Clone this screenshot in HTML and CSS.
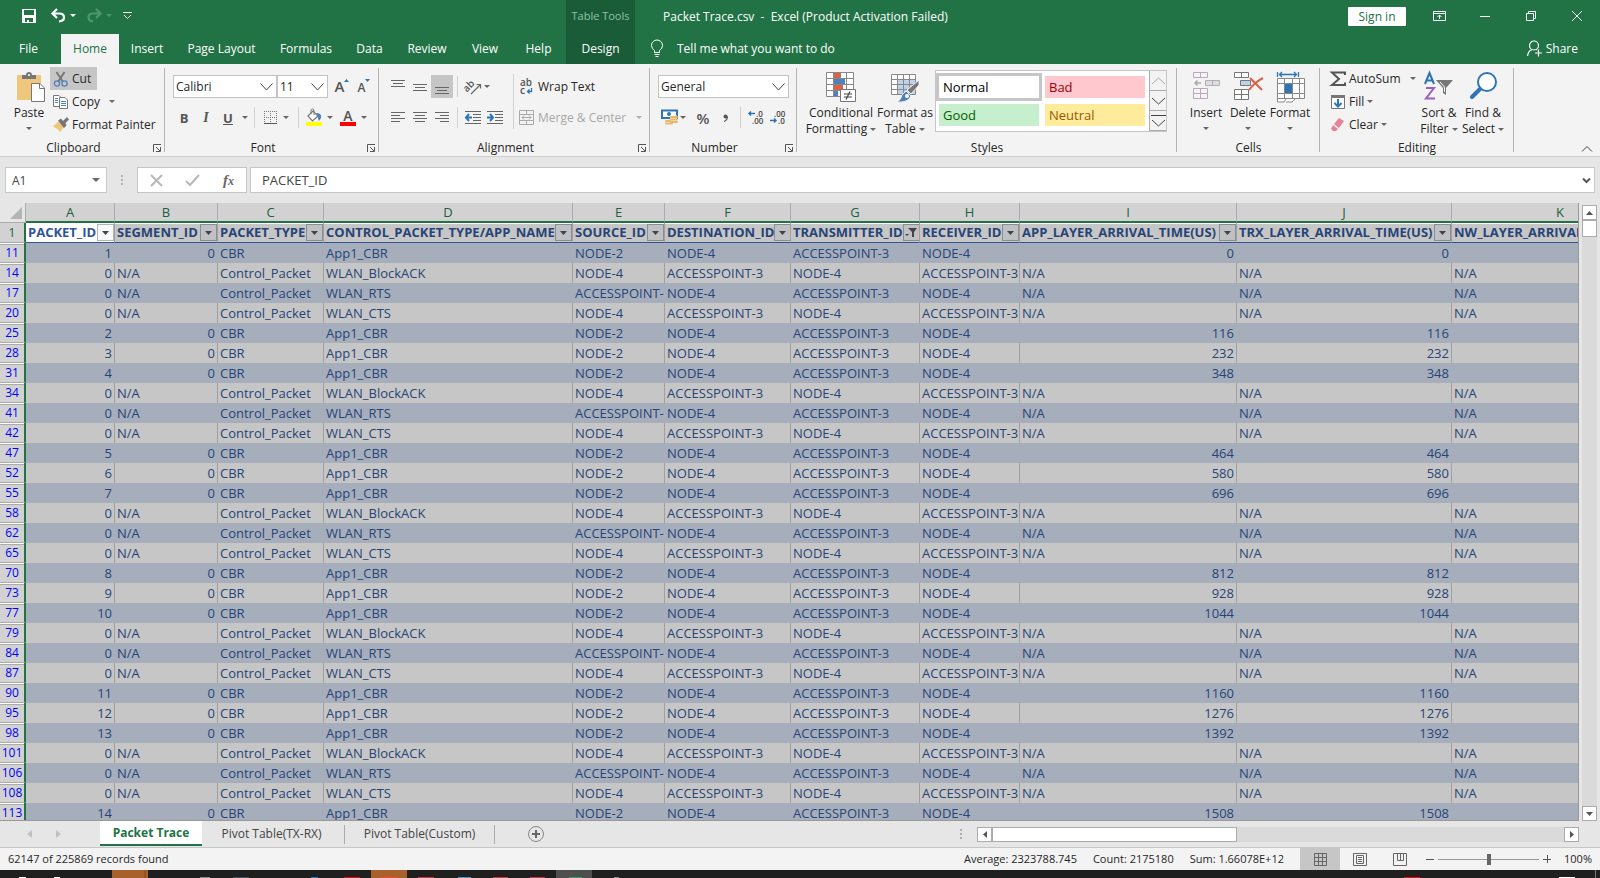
FILE: index.html
```html
<!DOCTYPE html>
<html lang="en">
<head>
  <meta charset="UTF-8">
  <title>Packet Trace.csv - Excel</title>
  <link rel="stylesheet" href="styles.css">
</head>
<body>

  <header class="app-header">
    <div class="title-row">
      <div class="quick-access">
        <button aria-label="Save"><svg width="14" height="14" viewBox="0 0 14 14"><path d="M0 0H14V14H0Z M2 1V6H12V1Z M3 9V13H5V11H7V13H11V9Z" fill="#fff" fill-rule="evenodd"/></svg></button>
        <button aria-label="Undo"><svg width="25" height="14" viewBox="0 0 25 14"><path d="M6 0 1.5 4.5 6 9M2 4.5H8.5Q13 4.5 13 8.500Q13 12 8 12.500" fill="none" stroke="#fff" stroke-width="2.200"/><path d="M19 5H25L22 8Z" fill="#fff"/></svg></button>
        <button aria-label="Redo"><svg width="25" height="14" viewBox="0 0 25 14"><path d="M9 0 13.500 4.500 9 9M13 4.500H6Q1.500 4.500 1.500 8.500Q1.500 12 6 12.500" fill="none" stroke="#4f9670" stroke-width="2.200"/><path d="M19 5H25L22 8Z" fill="#4f9670"/></svg></button>
        <button aria-label="Customize"><svg width="9" height="8" viewBox="0 0 9 8"><path d="M0 .5H9M1 3 4.500 6.500 8 3" fill="none" stroke="#fff"/></svg></button>
      </div>
      <div class="tools-label">Table Tools</div>
      <div class="doc-title">Packet Trace.csv&nbsp; -&nbsp; Excel (Product Activation Failed)</div>
      <button class="sign-in">Sign in</button>
      <div class="window-controls">
        <button aria-label="Ribbon options"><svg width="13" height="10" viewBox="0 0 13 10"><path d="M.5.500H12.500V9.500H.5ZM0 2.500H13M6.500 8V4M4.500 6 6.500 4 8.500 6" fill="none" stroke="#fff"/></svg></button>
        <button aria-label="Minimize"><svg width="10" height="10" viewBox="0 0 10 10"><path d="M0 5.500H10" stroke="#fff"/></svg></button>
        <button aria-label="Restore"><svg width="10" height="10" viewBox="0 0 10 10"><path d="M.5 2.500H7.500V9.500H.5ZM2.500 2V.5H9.500V7.500H8" fill="none" stroke="#fff"/></svg></button>
        <button aria-label="Close"><svg width="10" height="10" viewBox="0 0 10 10"><path d="M0 0 10 10M10 0 0 10" stroke="#fff"/></svg></button>
      </div>
    </div>
    <div class="tab-row">
      <nav class="ribbon-tabs">
        <a href="#" class="file">File</a>
        <a href="#" class="active">Home</a>
        <a href="#">Insert</a>
        <a href="#">Page Layout</a>
        <a href="#">Formulas</a>
        <a href="#">Data</a>
        <a href="#">Review</a>
        <a href="#">View</a>
        <a href="#">Help</a>
        <a href="#" class="design">Design</a>
      </nav>
      <button class="tell-me"><svg width="12" height="17" viewBox="0 0 12 17"><path d="M3.500 12.500V10.500Q.5 8.500.5 5.500A5 5 0 0 1 11.500 5.500Q11.500 8.500 8.500 10.500V12.500ZM3.500 14.500H8.500M4.500 16.500H7.500" fill="none" stroke="#fff"/></svg>Tell me what you want to do</button>
      <button class="share"><svg width="15" height="17" viewBox="0 0 15 17"><circle cx="7" cy="5.500" r="4.500" fill="none" stroke="#fff" stroke-width="1.200"/><path d="M.6 16Q1 11 5 9.500M9 9.500 10 10M11.500 9.500V16.500M8 13H15" fill="none" stroke="#fff" stroke-width="1.200"/></svg>Share</button>
    </div>
  </header>

  <section class="ribbon">
    <div class="group clipboard">
      <div class="group-body">
        <button class="big"><svg width="30" height="31" viewBox="0 0 30 31"><path d="M1 3H25V28H1Z" fill="#eec67c"/><path d="M6 7V3H10Q10 0 13 0T16 3H20V7Z" fill="#777"/><circle cx="13" cy="3" r="1" fill="#fff"/><path d="M15.500 11.500H24L28.500 16V29.500H15.500Z" fill="#fff" stroke="#777"/><path d="M23.500 11.500V16.500H28" fill="none" stroke="#777"/></svg><span>Paste</span><i class="arrow"></i></button>
        <div class="stack">
          <button class="small on"><svg width="16" height="16" viewBox="0 0 16 16"><path d="M3.500 1 10 11M11.500 1 5 11" stroke="#777" stroke-width="2"/><circle cx="4" cy="12.500" r="2.600" fill="none" stroke="#4f81bd" stroke-width="1.300"/><circle cx="11.500" cy="12.500" r="2.600" fill="none" stroke="#4f81bd" stroke-width="1.300"/></svg>Cut</button>
          <button class="small"><svg width="16" height="16" viewBox="0 0 16 16"><path d="M.5 1.500H6L8.500 4V12.500H.5Z" fill="#fff" stroke="#777"/><path d="M6.500 3.500H12L14.500 6V14.500H6.500Z" fill="#fff" stroke="#777"/><path d="M2 4.500H5M2 6.500H5M2 8.500H5M8 7.500H13M8 9.500H13M8 11.500H13" stroke="#4f81bd"/></svg>Copy<i class="arrow gap"></i></button>
          <button class="small"><svg width="16" height="16" viewBox="0 0 16 16"><path d="M6 4 11 10 7 15Q4 11 0 9.500Z" fill="#eec67c"/><path d="M5 3.500 8 1.500 10 4 14 0 16 2.500 12.500 6 13.500 8.500 11 11Z" fill="#777"/></svg>Format Painter</button>
        </div>
      </div>
      <div class="caption">Clipboard</div>
      <button class="launcher" aria-label="Clipboard settings"><svg width="8" height="8" viewBox="0 0 8 8"><path d="M.5 8V.5H8M3 3 7 7M7.500 3V7.500H3" fill="none" stroke="#555"/></svg></button>
    </div>

    <div class="group font">
      <div class="group-body rows">
        <div class="row">
          <select class="font-name" aria-label="Font"><option>Calibri</option></select>
          <select class="font-size" aria-label="Font size"><option>11</option></select>
          <button class="icon grow" aria-label="Grow font">A<svg width="5" height="3" viewBox="0 0 5 3"><path d="M0 3H5L2.500 0Z" fill="#2f74b5"/></svg></button>
          <button class="icon shrink" aria-label="Shrink font">A<svg width="5" height="3" viewBox="0 0 5 3"><path d="M0 0H5L2.500 3Z" fill="#2f74b5"/></svg></button>
        </div>
        <div class="row">
          <button class="icon"><b>B</b></button>
          <button class="icon"><em>I</em></button>
          <button class="icon"><u>U</u></button>
          <i class="arrow narrow"></i>
          <i class="sep"></i>
          <button class="icon" aria-label="Borders"><svg width="13" height="13" viewBox="0 0 13 13"><path d="M0 .5H13M0 6.500H13M.5 0V13M6.500 0V13M12.500 0V13" stroke="#777" stroke-dasharray="1 1"/><path d="M0 12.500H13" stroke="#555"/></svg></button>
          <i class="arrow"></i>
          <i class="sep wide"></i>
          <button class="icon" aria-label="Fill color"><svg width="16" height="17" viewBox="0 0 16 17"><path d="M2 7 7 2 12 7 6.500 12Z" fill="#fff" stroke="#777" stroke-width="1.200"/><path d="M5 5V2Q5 0 6.500 0T8 2V6" fill="none" stroke="#777"/><path d="M10 4Q16 4 15 9L13 12Q11 9 12 7Z" fill="#4f81bd"/><path d="M0 13H16V17H0Z" fill="#ff0"/></svg></button>
          <i class="arrow"></i>
          <button class="icon fontcolor" aria-label="Font color"><span>A</span></button>
          <i class="arrow"></i>
        </div>
      </div>
      <div class="caption">Font</div>
      <button class="launcher" aria-label="Font settings"><svg width="8" height="8" viewBox="0 0 8 8"><path d="M.5 8V.5H8M3 3 7 7M7.500 3V7.500H3" fill="none" stroke="#555"/></svg></button>
    </div>

    <div class="group alignment">
      <div class="group-body">
        <div class="rows">
          <div class="row">
            <button class="icon" aria-label="Top align"><svg width="14" height="14" viewBox="0 0 14 14"><path d="M0 .5H14M2 3.500H12M0 6.500H14" stroke="#666"/></svg></button>
            <button class="icon" aria-label="Middle align"><svg width="14" height="14" viewBox="0 0 14 14"><path d="M0 4.500H14M2 7.500H12M0 10.500H14" stroke="#666"/></svg></button>
            <button class="icon on" aria-label="Bottom align"><svg width="14" height="14" viewBox="0 0 14 14"><path d="M0 7.500H14M2 10.500H12M0 13.500H14" stroke="#666"/></svg></button>
            <i class="sep"></i>
            <button class="icon orient" aria-label="Orientation"><svg width="17" height="16" viewBox="0 0 17 16"><g transform="rotate(-45 6 8)"><text x="-1" y="9" class="glyph">ab</text></g><path d="M6 15 15 6M11.500 5.500H15.500V9.500" fill="none" stroke="#666" stroke-width="1.200"/></svg></button>
            <i class="arrow"></i>
          </div>
          <div class="row">
            <button class="icon" aria-label="Align left"><svg width="14" height="11" viewBox="0 0 14 11"><path d="M0 .5H14M0 3.500H9M0 6.500H14M0 9.500H9" stroke="#666"/></svg></button>
            <button class="icon" aria-label="Center"><svg width="14" height="11" viewBox="0 0 14 11"><path d="M0 .5H14M2 3.500H12M0 6.500H14M2 9.500H12" stroke="#666"/></svg></button>
            <button class="icon" aria-label="Align right"><svg width="14" height="11" viewBox="0 0 14 11"><path d="M0 .5H14M5 3.500H14M0 6.500H14M5 9.500H14" stroke="#666"/></svg></button>
            <i class="sep"></i>
            <button class="icon" aria-label="Decrease indent"><svg width="16" height="13" viewBox="0 0 16 13"><path d="M0 .5H16M8 3.500H16M8 6.500H16M8 9.500H16M0 12.500H16" stroke="#666"/><path d="M7 6.500H1M4 3 1 6.500 4 10" fill="none" stroke="#2f74b5" stroke-width="2"/></svg></button>
            <button class="icon" aria-label="Increase indent"><svg width="16" height="13" viewBox="0 0 16 13"><path d="M0 .5H16M8 3.500H16M8 6.500H16M8 9.500H16M0 12.500H16" stroke="#666"/><path d="M0 6.500H6M3 3 6 6.500 3 10" fill="none" stroke="#2f74b5" stroke-width="2"/></svg></button>
          </div>
        </div>
        <i class="sep tall"></i>
        <div class="rows">
          <button class="wrap"><svg width="15" height="16" viewBox="0 0 15 16"><text x="1" y="7" class="glyph">ab</text><text x="1" y="15" class="glyph">c</text><path d="M12.500 9V12.500H8.500M10.500 10.500 8.500 12.500 10.500 14.500" fill="none" stroke="#2f74b5" stroke-width="1.300"/></svg>Wrap Text</button>
          <button class="wrap" disabled><svg width="15" height="15" viewBox="0 0 15 15"><path d="M.5.500H14.500V14.500H.5ZM.5 4.500H14.500M.5 10.500H14.500M7.500 0V4M7.500 11V15M3 7.500H12M5 5.500 3 7.500 5 9.500M10 5.500 12 7.500 10 9.500" fill="none" stroke="#aaa"/></svg>Merge &amp; Center<i class="arrow gap"></i></button>
        </div>
      </div>
      <div class="caption">Alignment</div>
      <button class="launcher" aria-label="Alignment settings"><svg width="8" height="8" viewBox="0 0 8 8"><path d="M.5 8V.5H8M3 3 7 7M7.500 3V7.500H3" fill="none" stroke="#555"/></svg></button>
    </div>

    <div class="group number">
      <div class="group-body rows">
        <div class="row">
          <select class="num-format" aria-label="Number format"><option>General</option></select>
        </div>
        <div class="row">
          <button class="icon" aria-label="Accounting format"><svg width="17" height="17" viewBox="0 0 17 17"><path d="M1 1.500H16V9H1Z" fill="#fff" stroke="#2f74b5" stroke-width="2"/><circle cx="8" cy="5" r="2" fill="#2f74b5"/><path d="M9 6.500H16V14.500H9Z" fill="#f3f3f3"/><path d="M10 8H16M10 10.500H16M10 13H16M5 12H9M5 14.500H11" stroke="#e8b867" stroke-width="2" stroke-linecap="round"/></svg></button>
          <i class="arrow"></i>
          <button class="icon percent">%</button>
          <button class="icon" aria-label="Comma style"><svg width="5" height="8" viewBox="0 0 5 8"><circle cx="2.500" cy="2.500" r="2" fill="#555"/><path d="M4.500 2.500Q4.500 6 1 7.500" fill="none" stroke="#555" stroke-width="1.200"/></svg></button>
          <i class="sep"></i>
          <button class="icon" aria-label="Increase decimal"><svg width="16" height="15" viewBox="0 0 16 15"><text x="8" y="7" class="dec">.0</text><text x="4" y="14" class="dec">.00</text><path d="M7 3.500H1M3 1.500 1 3.500 3 5.500" fill="none" stroke="#2f74b5" stroke-width="1.500"/></svg></button>
          <button class="icon" aria-label="Decrease decimal"><svg width="16" height="15" viewBox="0 0 16 15"><text x="4" y="7" class="dec">.00</text><text x="8" y="14" class="dec">.0</text><path d="M0 10.500H6M4 8.500 6 10.500 4 12.500" fill="none" stroke="#2f74b5" stroke-width="1.500"/></svg></button>
        </div>
      </div>
      <div class="caption">Number</div>
      <button class="launcher" aria-label="Number settings"><svg width="8" height="8" viewBox="0 0 8 8"><path d="M.5 8V.5H8M3 3 7 7M7.500 3V7.500H3" fill="none" stroke="#555"/></svg></button>
    </div>

    <div class="group styles">
      <div class="group-body">
        <button class="big"><svg width="31" height="31" viewBox="0 0 31 31"><path d="M.5.500H27.500V24.500H.5Z" fill="#fff"/><path d="M8 1H14V6H8ZM8 13H17V18H8Z" fill="#db6244"/><path d="M8 7H19V12H8ZM8 19H12V24H8Z" fill="#4f81bd"/><path d="M.5.500H27.500V24.500H.5ZM.5 6.500H27.500M.5 12.500H27.500M.5 18.500H27.500M7.500 0V24M14.500 0V6M20.500 0V24" fill="none" stroke="#888"/><path d="M14.500 17.500H29.500V29.500H14.500Z" fill="#fff" stroke="#777"/><path d="M18 22H26M18 25H26M24 19.500 20 27.500" stroke="#444" stroke-width="1.200"/></svg><span>Conditional<br>Formatting <i class="arrow"></i></span></button>
        <button class="big"><svg width="31" height="31" viewBox="0 0 31 31"><path d="M1 2.500H25V22.500H1Z" fill="#fff"/><path d="M7 8H25V22H7Z" fill="#bed2ea"/><path d="M1.500 2.500H25.500V22.500H1.500ZM1 7.500H25M1 12.500H25M1 17.500H25M7.500 2V22M13.500 2V22M19.500 2V22" fill="none" stroke="#888"/><path d="M29 8V13L21 22 17 18Z" fill="#777" stroke="#f3f3f3"/><path d="M16 19 21 24Q18 31 7 30Q11 28 12 23Z" fill="#4f81bd" stroke="#f3f3f3"/><circle cx="17" cy="24" r="2" fill="#fff"/></svg><span>Format as<br>Table <i class="arrow"></i></span></button>
        <div class="gallery">
          <div class="swatches">
            <button class="swatch normal">Normal</button>
            <button class="swatch bad">Bad</button>
            <button class="swatch good">Good</button>
            <button class="swatch neutral">Neutral</button>
          </div>
          <div class="gallery-scroll">
            <button disabled aria-label="Scroll up"><svg width="15" height="8" viewBox="0 0 15 8"><path d="M1 7 7.500 1 14 7" fill="none" stroke="#aaa"/></svg></button>
            <button aria-label="Scroll down"><svg width="15" height="8" viewBox="0 0 15 8"><path d="M1 1 7.500 7 14 1" fill="none" stroke="#444"/></svg></button>
            <button aria-label="More styles"><svg width="15" height="14" viewBox="0 0 15 14"><path d="M0 1.500H15M1 6 7.500 12 14 6" fill="none" stroke="#444"/></svg></button>
          </div>
        </div>
      </div>
      <div class="caption">Styles</div>
    </div>

    <div class="group cells">
      <div class="group-body">
        <button class="big"><svg width="28" height="31" viewBox="0 0 28 31"><path d="M1.500.500H15.500V5.500H1.500ZM8.500 0V6M1.500 16.500H15.500V26.500H1.500ZM8.500 16V27M1 21.500H16" fill="#f8f2f8" stroke="#b5adb5"/><path d="M13.500 8.500H27.500V13.500H13.500ZM20.500 8V14" fill="#ddd" stroke="#b5adb5"/><path d="M9 11H3M5.500 8.500 3 11 5.500 13.500" fill="none" stroke="#aaa" stroke-width="1.500"/></svg><span>Insert</span><i class="arrow"></i></button>
        <button class="big"><svg width="30" height="31" viewBox="0 0 30 31"><path d="M1.500.500H15.500V5.500H1.500ZM8.500 0V6M1.500 17.500H15.500V27.500H1.500ZM8.500 17V28M1 22.500H16" fill="#fff" stroke="#777"/><path d="M7.500 8.500H17.500V13.500H7.500Z" fill="#bed2ea" stroke="#777"/><path d="M17 6 29 18M30 6Q22 10 16 18" fill="none" stroke="#db6244" stroke-width="2"/></svg><span>Delete</span><i class="arrow"></i></button>
        <button class="big"><svg width="29" height="31" viewBox="0 0 29 31"><path d="M1.500 0V5M22.500 0V5M3 2.500H21M6 0 3.500 2.500 6 5M18 0 20.500 2.500 18 5" fill="none" stroke="#2f74b5" stroke-width="1.300"/><path d="M1.500 6.500H28.500V26.500H19L17 30H1.500Z" fill="#fff"/><path d="M1.500 6.500H28.500V26.500H1.500ZM1 11.500H28M1 21.500H28M8.500 6V27M16.500 6V27M23.500 6V27M1.500 26V30H8L10 27M10 30H16L19 27" fill="none" stroke="#888"/><path d="M9 12H16V21H9Z" fill="#2f74b5"/></svg><span>Format</span><i class="arrow"></i></button>
      </div>
      <div class="caption">Cells</div>
    </div>

    <div class="group editing">
      <div class="group-body">
        <div class="stack">
          <button class="small"><svg width="16" height="16" viewBox="0 0 16 16"><path d="M15 4V1.500H2L9 8 2 14H15V11.500" fill="none" stroke="#555" stroke-width="2"/></svg>AutoSum<i class="arrow gap"></i></button>
          <button class="small"><svg width="16" height="16" viewBox="0 0 16 16"><path d="M1.500 1.500H14.500V14.500H1.500Z" fill="#fff" stroke="#777"/><path d="M1 1H15V4H1Z" fill="#777"/><path d="M8 5V12M4.500 9 8 12.500 11.500 9" fill="none" stroke="#2f74b5" stroke-width="2"/></svg>Fill<i class="arrow near"></i></button>
          <button class="small"><svg width="16" height="16" viewBox="0 0 16 16"><path d="M9 1 14 4 9 11 4 7Z" fill="#e8829a"/><path d="M3 8 8 12 6 14H3L1 12Z" fill="#e8829a"/></svg>Clear<i class="arrow near"></i></button>
        </div>
        <button class="big"><svg width="30" height="31" viewBox="0 0 30 31"><path d="M1 12 5.500 1 10 12M2.500 8.500H8.500" fill="none" stroke="#2f74b5" stroke-width="2"/><path d="M2 16H10L2 26.500H11" fill="none" stroke="#9b5fc0" stroke-width="2"/><path d="M12 8H29L22 16V23L19 21V16Z" fill="#777"/><path d="M16 10 20.500 15V20" fill="none" stroke="#fff"/></svg><span>Sort &amp;<br>Filter <i class="arrow"></i></span></button>
        <button class="big"><svg width="29" height="31" viewBox="0 0 29 31"><circle cx="18" cy="10" r="9" fill="#fff" stroke="#2f74b5" stroke-width="2"/><path d="M11 17 3 25" stroke="#2f74b5" stroke-width="4" stroke-linecap="round"/></svg><span>Find &amp;<br>Select <i class="arrow"></i></span></button>
      </div>
      <div class="caption">Editing</div>
    </div>
    <button class="collapse" aria-label="Collapse ribbon"><svg width="10" height="6" viewBox="0 0 10 6"><path d="M0 5.500 5 .5 10 5.500" fill="none" stroke="#444"/></svg></button>
  </section>

  <section class="formula-bar">
    <div class="name-box"><input type="text" value="A1" aria-label="Name box"><i class="arrow"></i></div>
    <div class="dots"><i></i><i></i><i></i></div>
    <div class="formula-tools">
      <button aria-label="Cancel"><svg width="11" height="11" viewBox="0 0 11 11"><path d="M0 0 11 11M11 0 0 11" stroke="#b8b8b8" stroke-width="2"/></svg></button>
      <button aria-label="Enter"><svg width="13" height="11" viewBox="0 0 13 11"><path d="M0 6 4 10 13 0" fill="none" stroke="#b8b8b8" stroke-width="2"/></svg></button>
      <button class="fx">f<small>x</small></button>
    </div>
    <div class="formula-input"><input type="text" value="PACKET_ID" aria-label="Formula"><svg width="7" height="5" viewBox="0 0 7 5"><path d="M0 .5 3.500 4 7 .5" fill="none" stroke="#555" stroke-width="2"/></svg></div>
  </section>

  <main class="sheet-area">
    <div class="sheet">
      <table id="grid">
        <colgroup>
          <col class="w-num"><col class="w-a"><col class="w-b"><col class="w-c"><col class="w-d"><col class="w-e"><col class="w-f"><col class="w-g"><col class="w-h"><col class="w-i"><col class="w-j"><col class="w-k">
        </colgroup>
        <thead></thead>
        <tbody></tbody>
      </table>
    </div>
    <div class="v-scroll">
      <button aria-label="Scroll up"><svg width="7" height="4" viewBox="0 0 7 4"><path d="M0 4H7L3.500 0Z" fill="#555"/></svg></button>
      <div class="thumb"></div>
      <button class="last" aria-label="Scroll down"><svg width="7" height="4" viewBox="0 0 7 4"><path d="M0 0H7L3.500 4Z" fill="#555"/></svg></button>
    </div>
  </main>

  <section class="sheet-tabs">
    <div class="tab-nav">
      <button disabled aria-label="Previous sheet"><svg width="5" height="8" viewBox="0 0 5 8"><path d="M5 0V8L0 4Z" fill="#c0c0c0"/></svg></button>
      <button disabled aria-label="Next sheet"><svg width="5" height="8" viewBox="0 0 5 8"><path d="M0 0V8L5 4Z" fill="#c0c0c0"/></svg></button>
    </div>
    <a href="#" class="sheet-tab active">Packet Trace</a>
    <a href="#" class="sheet-tab tx">Pivot Table(TX-RX)</a>
    <a href="#" class="sheet-tab custom">Pivot Table(Custom)</a>
    <button class="add-sheet" aria-label="New sheet"><svg width="16" height="16" viewBox="0 0 16 16"><circle cx="8" cy="8" r="7.500" fill="none" stroke="#888"/><path d="M8 4V12M4 8H12" stroke="#666" stroke-width="2"/></svg></button>
    <div class="dots"><i></i><i></i><i></i></div>
    <div class="h-scroll">
      <button aria-label="Scroll left"><svg width="4" height="7" viewBox="0 0 4 7"><path d="M4 0V7L0 3.500Z" fill="#555"/></svg></button>
      <div class="thumb"></div>
      <button class="last" aria-label="Scroll right"><svg width="4" height="7" viewBox="0 0 4 7"><path d="M0 0V7L4 3.500Z" fill="#555"/></svg></button>
    </div>
  </section>

  <footer class="status-bar">
    <span class="records">62147 of 225869 records found</span>
    <span>Average: 2323788.745</span>
    <span>Count: 2175180</span>
    <span>Sum: 1.66078E+12</span>
    <div class="views">
      <button class="on" aria-label="Normal view"><svg width="13" height="13" viewBox="0 0 13 13"><path d="M.5.500H12.500V12.500H.5ZM4.500 0V13M8.500 0V13M0 4.500H13M0 8.500H13" fill="none" stroke="#666"/></svg></button>
      <button aria-label="Page layout view"><svg width="14" height="13" viewBox="0 0 14 13"><path d="M.5.500H13.500V12.500H.5ZM3.500 2.500H10.500V10.500H3.500ZM5 4.500H9M5 6.500H9M5 8.500H9" fill="none" stroke="#666"/></svg></button>
      <button aria-label="Page break view"><svg width="14" height="13" viewBox="0 0 14 13"><path d="M.5.500H13.500V12.500H.5ZM4.500 0V7.500H10.500V0M7.500 0V7" fill="none" stroke="#666"/></svg></button>
    </div>
    <div class="zoom">
      <button aria-label="Zoom out"><svg width="8" height="8" viewBox="0 0 8 8"><path d="M0 4.500H8" stroke="#555"/></svg></button>
      <input type="range" min="0" max="100" value="50" aria-label="Zoom">
      <button aria-label="Zoom in"><svg width="8" height="8" viewBox="0 0 8 8"><path d="M0 4.500H8M4.500 0V8" stroke="#555"/></svg></button>
      <span>100%</span>
    </div>
  </footer>

  <div class="taskbar">
    <svg width="620" height="8" viewBox="0 0 620 8">
      <path d="M112 0H148V8H112ZM371 0H407V8H371Z" fill="#a9612b"/>
      <path d="M145 0V8" stroke="#7d4a22"/>
      <path d="M556 0H592V8H556Z" fill="#4f4f4f"/>
      <path d="M19 7H26V8H19ZM54 7H60V8H54Z" fill="#fff"/>
      <path d="M200 7H210V8H200ZM614 7H619V8H614Z" fill="#8a8a8a"/>
      <path d="M233 7H249V8H233Z" fill="#44525d"/>
      <path d="M311 7H318V8H311Z" fill="#1678d0"/>
      <path d="M344 7H360V8H344Z" fill="#e80c0c"/>
      <path d="M380 7H397V8H380Z" fill="#ee4b35"/>
      <path d="M418 7H434V8H418ZM493 7H508V8H493ZM530 7H545V8H530Z" fill="#c23a3d"/>
      <path d="M458 7H471V8H458Z" fill="#4596d8"/>
      <path d="M569 7H582V8H569Z" fill="#2aa36a"/>
    </svg>
    <svg width="200" height="8" viewBox="0 0 200 8">
      <path d="M4 7H20V8H4Z" fill="#e80c0c"/>
      <path d="M159 7H175V8H159Z" fill="#fff"/>
      <path d="M195.500 0V8" stroke="#777"/>
    </svg>
  </div>

  <script>
    const headers = [
      'PACKET_ID', 'SEGMENT_ID', 'PACKET_TYPE', 'CONTROL_PACKET_TYPE/APP_NAME',
      'SOURCE_ID', 'DESTINATION_ID', 'TRANSMITTER_ID', 'RECEIVER_ID',
      'APP_LAYER_ARRIVAL_TIME(US)', 'TRX_LAYER_ARRIVAL_TIME(US)', 'NW_LAYER_ARRIVAL_TIME(US)'
    ];
    const rowNumbers = [
      11, 14, 17, 20, 25, 28, 31, 34, 41, 42, 47, 52, 55, 58, 62, 65, 70, 73,
      77, 79, 84, 87, 90, 95, 98, 101, 106, 108, 113
    ];
    const ap = 'ACCESSPOINT-3';
    const control = [
      ['WLAN_BlockACK', 'NODE-4', ap, 'NODE-4', ap],
      ['WLAN_RTS', 'ACCESSPOINT-', 'NODE-4', ap, 'NODE-4'],
      ['WLAN_CTS', 'NODE-4', ap, 'NODE-4', ap]
    ];

    // one data packet first, then 3 control packets and 3 data packets in turn
    let packetId = 0;
    function rowData(i) {
      const step = (i + 5) % 6;
      if (i > 0 && step < 3) {
        return [0, 'N/A', 'Control_Packet', ...control[step], 'N/A', 'N/A', 'N/A'];
      }
      packetId++;
      const time = (packetId - 1) * 116;
      return [packetId, 0, 'CBR', 'App1_CBR', 'NODE-2', 'NODE-4', ap, 'NODE-4', time, time, ''];
    }

    const arrow = '<svg width="7" height="4" viewBox="0 0 7 4"><path d="M0 0H7L3.500 4Z"/></svg>';
    const funnel = '<svg width="12" height="9" viewBox="0 0 12 9"><path d="M3 0H12L9 4V9H7V4ZM0 6H4L2 8Z"/></svg>';

    const letters = 'ABCDEFGHIJK'.split('');
    const thead = document.querySelector('#grid thead');
    thead.innerHTML = `
      <tr class="letters"><th><span class="corner"></span></th>${letters.map(l => `<th>${l}</th>`).join('')}</tr>
      <tr class="fields"><th class="num">1</th>${headers.map((h, i) => `
        <th><div class="field"><span>${h}</span><button aria-label="Filter ${h}">${i === 6 ? funnel : arrow}</button></div></th>`).join('')}
      </tr>`;

    document.querySelector('#grid tbody').innerHTML = rowNumbers.map((n, i) => `
      <tr><th class="num">${n}</th>${rowData(i).map(v =>
        `<td${typeof v === 'number' ? ' class="right"' : ''}>${v}</td>`).join('')}</tr>`).join('');
  </script>
</body>
</html>
```
FILE: styles.css
```css
/* Base */
* { box-sizing: border-box; margin: 0; padding: 0; }
body {
  height: 100vh;
  display: flex;
  flex-direction: column;
  overflow: hidden;
  font-family: "Open Sans", "Noto Sans", sans-serif;
  font-size: 12px;
  color: #262626;
  background: #e6e6e6;
}
button, input, select { font: inherit; color: inherit; }
button { border: none; background: none; white-space: nowrap; }
a { color: inherit; text-decoration: none; }
svg { display: block; flex: none; overflow: visible; }
i { font-style: normal; }

.arrow {
  display: inline-block;
  flex: none;
  border: 3px solid transparent;
  border-top-color: #666;
  border-bottom: none;
  vertical-align: middle;
}

/* Title bar and ribbon tabs */
.app-header { background: #217346; color: #fff; flex: none; }
.title-row { display: flex; height: 32px; align-items: center; }
.quick-access {
  flex: none;
  width: 566px;
  display: flex;
  align-items: center;
  gap: 11px;
  padding-left: 22px;
}
.quick-access button:nth-child(2) { margin-left: 4px; }
.tools-label {
  width: 69px;
  height: 32px;
  line-height: 32px;
  text-align: center;
  font-size: 11px;
  color: #8fc3a5;
  background: #1a5c38;
}
.doc-title { flex: 1; padding-left: 28px; white-space: nowrap; }
.sign-in {
  width: 58px;
  height: 19px;
  background: #fff;
  color: #217346;
  border-radius: 1px;
}
.window-controls { display: flex; margin-left: 10px; }
.window-controls button {
  width: 46px;
  height: 32px;
  display: flex;
  align-items: center;
  justify-content: center;
}
.tab-row { display: flex; height: 32px; align-items: center; }
.ribbon-tabs {
  display: grid;
  grid-template-columns: 61px 58px 56px 93px 76px 51px 64px 52px 55px 69px;
  height: 32px;
  line-height: 34px;
  text-align: center;
  white-space: nowrap;
}
.ribbon-tabs .file { padding-right: 4px; }
.ribbon-tabs .active {
  height: 30px;
  margin-top: 2px;
  line-height: 30px;
  background: #f3f3f3;
  color: #217346;
}
.ribbon-tabs .design { background: #1a5c38; }
.tell-me, .share { display: flex; align-items: center; gap: 14px; }
.tell-me { padding-left: 16px; }
.share { margin-left: auto; padding-right: 22px; gap: 4px; }

/* Ribbon */
.ribbon {
  flex: none;
  display: flex;
  height: 93px;
  background: #f3f3f3;
  border-bottom: 1px solid #cfcfcf;
}
.group {
  position: relative;
  flex: none;
  display: flex;
  flex-direction: column;
}
.group::after {
  content: "";
  position: absolute;
  right: 0;
  top: 4px;
  width: 1px;
  height: 84px;
  background: #b4b4b4;
}
.group-body { display: flex; height: 76px; }
.caption { text-align: center; line-height: 16px; }
.launcher { position: absolute; right: 4px; bottom: 4px; }
.clipboard { width: 165px; }
.clipboard .caption, .font .caption { padding-right: 18px; }
.font { width: 214px; }
.alignment { width: 271px; }
.alignment .caption, .number .caption { padding-right: 18px; }
.number { width: 147px; }
.styles { width: 380px; }
.cells { width: 143px; }
.editing { width: 194px; }

.big {
  display: flex;
  flex-direction: column;
  align-items: center;
  padding-top: 8px;
  line-height: 16px;
}
.big > span { margin-top: 2px; }
.big > .arrow { margin-top: 6px; }
.clipboard .big { width: 50px; padding-left: 8px; }
.clipboard .big svg { margin-left: 4px; }
.stack { padding-top: 3px; }
.small {
  display: flex;
  align-items: center;
  gap: 3px;
  height: 23px;
  padding: 0 6px 0 3px;
}
.on { background: #c6c6c6; }
.arrow.gap { margin-left: 6px; }
.arrow.near { margin-left: 0; }

.rows { display: flex; flex-direction: column; gap: 8px; padding-top: 11px; }
.row { display: flex; align-items: center; height: 23px; }
.icon {
  width: 22px;
  height: 23px;
  display: flex;
  align-items: center;
  justify-content: center;
  color: #555;
}
.sep { width: 1px; height: 21px; margin: 0 4px; background: #d0d0d0; }
.sep.tall { height: 55px; margin: 10px 5px 0 7px; }
select {
  appearance: none;
  height: 23px;
  padding-left: 2px;
  border: 1px solid #c3c3c3;
  border-radius: 0;
  background: #fff url("data:image/svg+xml,%3Csvg xmlns='http://www.w3.org/2000/svg' width='13' height='8'%3E%3Cpath d='M.5.5 6.500 7 12.500.5' fill='none' stroke='%23444'/%3E%3C/svg%3E") no-repeat right 3px center;
}
.font.group .group-body { padding-left: 8px; }
.font-name { width: 104px; }
.font-size { width: 51px; margin-right: 3px; }
.grow { align-items: flex-start; font-size: 15px; font-weight: 600; line-height: 23px; }
.shrink { align-items: flex-start; font-size: 12px; font-weight: 600; line-height: 25px; }
.grow svg, .shrink svg { margin-top: 4px; }
.font .arrow { margin: 0 4px 0 2px; }
.font .sep.wide { margin: 0 4px 0 5px; }
.font .arrow.narrow { margin: 0 2px 0 3px; }
.icon b, .icon em, .icon u { font-size: 13px; font-weight: 700; }
.icon em { font-family: "Liberation Serif", serif; font-size: 14px; }
.fontcolor span { width: 16px; line-height: 13px; font-size: 14px; font-weight: 600; border-bottom: 4px solid #f00; }
.alignment .group-body { padding-left: 8px; }
.glyph { font-size: 10px; font-weight: 600; fill: #555; }
.dec { font-size: 8px; font-weight: 600; fill: #444; }
.wrap { display: flex; align-items: center; gap: 4px; height: 23px; }
.wrap:disabled { color: #a8a8a8; }
.wrap:disabled .arrow { border-top-color: #b0b0b0; }
.number .group-body { padding-left: 8px; }
.num-format { width: 131px; }
.percent { font-size: 15px; font-weight: 600; margin-left: 6px; }

.styles .group-body { padding-left: 12px; }
.styles .big { width: 64px; }
.styles .big + .gallery { margin-left: -2px; }
.gallery {
  display: flex;
  width: 232px;
  height: 62px;
  margin-top: 6px;
  border: 1px solid #c6c6c6;
  background: #fff;
}
.swatches {
  flex: 1;
  display: grid;
  grid-template-columns: 100px 100px;
  grid-template-rows: 22px 22px;
  gap: 6px;
  padding: 5px 3px;
}
.swatch { text-align: left; padding-left: 4px; font-size: 13px; line-height: 20px; }
.normal { outline: 3px solid #c6c6c6; color: #000; }
.bad { background: #ffc7ce; color: #9c0006; }
.good { background: #c6efce; color: #006100; }
.neutral { background: #ffeb9c; color: #9c5700; }
.gallery-scroll { width: 17px; display: flex; flex-direction: column; background: #f3f3f3; }
.gallery-scroll button {
  flex: 1;
  display: flex;
  align-items: center;
  justify-content: center;
  border-left: 1px solid #ababab;
  border-bottom: 1px solid #ababab;
}

.cells .group-body { padding-left: 8px; }
.cells .big { width: 42px; }
.editing .group-body { padding-left: 7px; }
.editing .stack { width: 90px; }
.editing .big { width: 44px; }
.collapse { align-self: flex-end; margin: 0 8px 4px auto; }

/* Formula bar */
.formula-bar {
  flex: none;
  display: flex;
  align-items: flex-start;
  height: 46px;
  padding: 10px 5px 0;
  color: #444;
}
.formula-bar input { border: none; outline: none; background: none; min-width: 0; flex: 1; }
.name-box, .formula-tools, .formula-input {
  display: flex;
  align-items: center;
  height: 26px;
  border: 1px solid #c6c6c6;
  background: #fff;
}
.name-box { width: 102px; padding: 0 6px; }
.name-box .arrow { border-width: 4px 4px 0; }
.dots { display: flex; flex-direction: column; gap: 2px; width: 2px; }
.dots i { width: 2px; height: 2px; background: #b0b0b0; }
.formula-bar .dots { margin: 8px 14px 0; }
.formula-tools { width: 110px; justify-content: space-between; padding: 0 12px 0 13px; margin-right: 3px; }
.fx { font: italic 700 15px "Liberation Serif", serif; color: #666; }
.fx small { font-size: 12px; }
.formula-input { flex: 1; padding: 0 4px 0 11px; font-size: 13px; }

/* Worksheet */
.sheet-area { flex: 1; min-height: 0; display: flex; }
.sheet {
  flex: 1;
  min-width: 0;
  overflow: hidden;
  border-right: 1px solid #999;
  border-bottom: 1px solid #999;
}
table { width: 1669px; table-layout: fixed; border-collapse: separate; border-spacing: 0; }
.w-num { width: 26px; }
.w-a { width: 89px; }
.w-b { width: 103px; }
.w-c { width: 106px; }
.w-d { width: 249px; }
.w-e { width: 92px; }
.w-f { width: 126px; }
.w-g { width: 129px; }
.w-h { width: 100px; }
.w-i { width: 217px; }
.w-j { width: 215px; }
.w-k { width: 217px; }
.letters th {
  height: 20px;
  font-size: 13px;
  font-weight: 400;
  line-height: 18px;
  color: #1e6041;
  background: #d2d2d2;
  border-right: 1px solid #ababab;
  border-bottom: 2px solid #217346;
}
.letters th:first-child { background: #e6e6e6; border-bottom: 1px solid #ababab; }
.corner {
  display: block;
  width: 0;
  margin-left: 10px;
  border-left: 12px solid transparent;
  border-bottom: 12px solid #b4b4b4;
}
td, .fields th {
  height: 20px;
  padding: 0 2px;
  overflow: hidden;
  white-space: nowrap;
  font-size: 13px;
  line-height: 20px;
  color: #264478;
  text-align: left;
  border-right: 1px solid #a0a0a0;
  background: #c6c6c6;
}
tbody tr:nth-child(odd) td { background: #a6aebc; border-right-color: #a6aebc; }
.fields th { border-bottom: 1px solid #305496; line-height: 19px; box-shadow: inset 0 1px #fff; }
.fields th:nth-child(2) { background: #fff; color: #305496; }
.fields .num, tbody .num {
  padding: 0;
  font-size: 12px;
  font-weight: 400;
  line-height: 18px;
  text-align: center;
  color: #00f;
  background: #d2d2d2;
  border-right: 2px solid #217346;
  border-bottom: 1px solid #ababab;
  box-shadow: inset 0 1px #fff, inset 0 2px #ababab;
}
.fields .num { color: #1e6041; box-shadow: none; }
.field { display: flex; height: 19px; justify-content: space-between; margin-right: -2px; }
.field button {
  flex: none;
  width: 17px;
  height: 17px;
  display: flex;
  align-items: center;
  justify-content: center;
  margin-top: 1px;
  border: 1px solid #8a8d91;
  background: #bfc1c4;
}
.field svg { fill: #444; }
.fields th:nth-child(2) button { background: #f6f8fa; border-color: #b0b4b8; }
.right { text-align: right; }

/* Scroll bars */
.v-scroll, .h-scroll { display: flex; background: #dadada; }
.v-scroll { flex-direction: column; width: 15px; margin: 2px 3px 0 3px; }
.v-scroll button, .h-scroll button {
  flex: none;
  width: 15px;
  height: 15px;
  display: flex;
  align-items: center;
  justify-content: center;
  border: 1px solid #ababab;
  background: #fff;
}
.thumb { border: 1px solid #ababab; background: #fff; }
.v-scroll .thumb { height: 17px; }
.v-scroll .last { margin-top: auto; }
.h-scroll { width: 602px; }
.h-scroll .thumb { width: 245px; }
.h-scroll .last { margin-left: auto; }

/* Sheet tabs */
.sheet-tabs {
  flex: none;
  display: flex;
  align-items: center;
  height: 27px;
  padding-right: 21px;
  color: #444;
  border-bottom: 1px solid #c6c6c6;
}
.tab-nav { width: 100px; display: flex; gap: 24px; padding-left: 27px; }
.sheet-tab { height: 19px; line-height: 18px; text-align: center; border-right: 1px solid #ababab; }
.sheet-tab.active {
  width: 102px;
  height: 25px;
  align-self: flex-start;
  line-height: 24px;
  color: #217346;
  font-weight: 700;
  background: #fff;
  border-right: none;
  border-bottom: 2px solid #217346;
}
.tx { width: 143px; padding-right: 3px; }
.custom { width: 150px; }
.add-sheet { margin-left: 33px; }
.sheet-tabs .dots { margin: 0 15px 0 auto; }

/* Status bar */
.status-bar {
  flex: none;
  display: flex;
  align-items: center;
  gap: 16px;
  height: 22px;
  padding: 0 8px;
  font-size: 11px;
  line-height: 18px;
  background: #f3f3f3;
}
.records { margin-right: auto; }
.views { display: flex; }
.views button { width: 40px; height: 22px; display: flex; align-items: center; justify-content: center; }
.zoom { display: flex; align-items: center; gap: 4px; margin-left: -10px; }
.zoom span { width: 37px; text-align: right; }
.zoom input { appearance: none; width: 101px; height: 12px; background: linear-gradient(#999, #999) no-repeat center / 100% 1px; }
.zoom input::-webkit-slider-thumb { appearance: none; width: 4px; height: 11px; background: #666; }

.taskbar { flex: none; display: flex; justify-content: space-between; height: 8px; background: #1f1f1f; }
```
